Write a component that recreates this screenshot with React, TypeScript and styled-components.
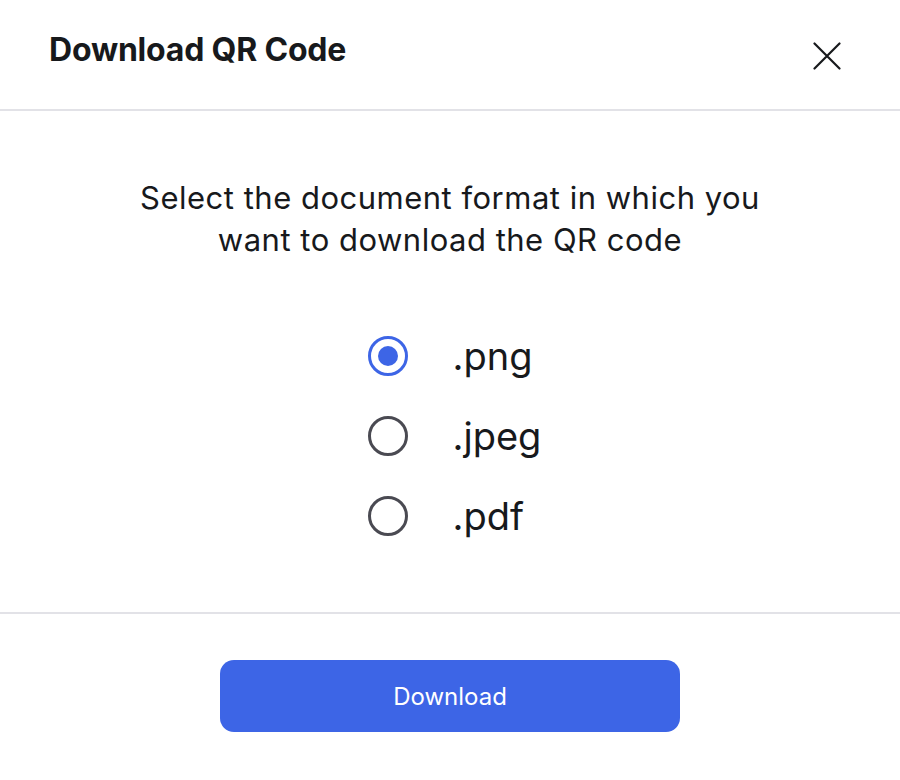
import React, { useState } from 'react';
import styled, { createGlobalStyle } from 'styled-components';

const FORMATS = ['.png', '.jpeg', '.pdf'];
const BLUE = '#3d65e6';

const GlobalStyle = createGlobalStyle`
  html, body {
    margin: 0;
    padding: 0;
    background: #ffffff;
  }
  body {
    font-family: Inter, "Noto Sans", sans-serif;
    color: #17191c;
  }
`;

const Modal = styled.div`
  width: 900px;
  height: 780px;
  background: #ffffff;
  display: flex;
  flex-direction: column;
`;

const Header = styled.div`
  height: 111px;
  padding: 0 49px;
  display: flex;
  align-items: center;
  justify-content: space-between;
  border-bottom: 2px solid #e2e2e7;
  box-sizing: border-box;
`;

const Title = styled.h2`
  margin: 0 0 10px;
  font-size: 32px;
  font-weight: 700;
  letter-spacing: -0.2px;
`;

const CloseButton = styled.button`
  border: 0;
  background: none;
  padding: 0;
  margin: 2px 9px 0 0;
  width: 30px;
  height: 30px;
  display: flex;
  align-items: center;
  justify-content: center;
  cursor: pointer;
`;

const Body = styled.div`
  height: 503px;
  padding-top: 66px;
  box-sizing: border-box;
  border-bottom: 2px solid #e2e2e7;
  display: flex;
  flex-direction: column;
  align-items: center;
`;

const Prompt = styled.p`
  margin: 0;
  width: 680px;
  text-align: center;
  font-size: 31px;
  line-height: 42px;
  letter-spacing: 0.5px;
`;

const Options = styled.div`
  margin-top: 75px;
  margin-left: 9px;
  display: flex;
  flex-direction: column;
  gap: 40px;
`;

const Option = styled.label`
  display: flex;
  align-items: center;
  gap: 45px;
  height: 40px;
  font-size: 38px;
  cursor: pointer;
`;

const Circle = styled.span<{ $checked: boolean }>`
  width: 40px;
  height: 40px;
  box-sizing: border-box;
  border-radius: 50%;
  border: 3.5px solid ${(p) => (p.$checked ? BLUE : '#4a4a52')};
  display: flex;
  align-items: center;
  justify-content: center;

  &::after {
    content: '';
    width: 20px;
    height: 20px;
    border-radius: 50%;
    background: ${BLUE};
    display: ${(p) => (p.$checked ? 'block' : 'none')};
  }
`;

const Footer = styled.div`
  display: flex;
  justify-content: center;
  padding-top: 46px;
`;

const DownloadButton = styled.button`
  width: 460px;
  height: 72px;
  border: 0;
  border-radius: 14px;
  background: ${BLUE};
  color: #ffffff;
  font-family: Inter, "Noto Sans", sans-serif;
  font-size: 24px;
  cursor: pointer;
`;

const App = () => {
  const [format, setFormat] = useState('.png');

  return (
    <>
      <GlobalStyle />
      <Modal>
        <Header>
          <Title>Download QR Code</Title>
          <CloseButton aria-label="Close">
            <svg width="28" height="28" viewBox="0 0 28 28" fill="none">
              <path
                d="M1.5 1.5L26.5 26.5M26.5 1.5L1.5 26.5"
                stroke="#17191c"
                strokeWidth="2.2"
                strokeLinecap="round"
              />
            </svg>
          </CloseButton>
        </Header>
        <Body>
          <Prompt>
            Select the document format in which you want to download the QR
            code
          </Prompt>
          <Options>
            {FORMATS.map((f) => (
              <Option key={f} onClick={() => setFormat(f)}>
                <Circle $checked={format === f} />
                {f}
              </Option>
            ))}
          </Options>
        </Body>
        <Footer>
          <DownloadButton>Download</DownloadButton>
        </Footer>
      </Modal>
    </>
  );
};

export default App;
